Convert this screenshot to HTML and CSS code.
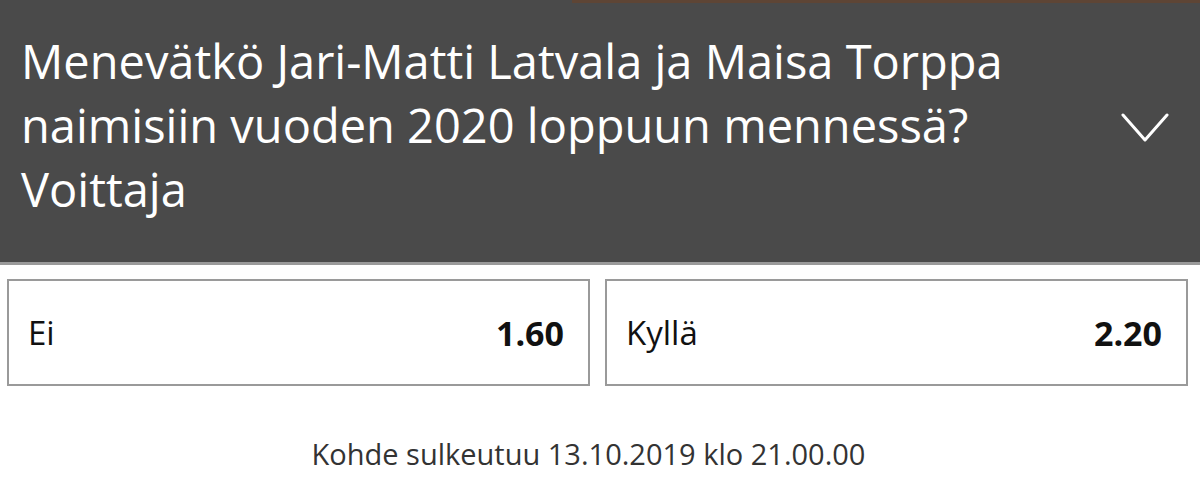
FILE: index.html
```html
<!DOCTYPE html>
<html lang="fi">
<head>
    <meta charset="UTF-8">
    <title>Voittaja</title>
    <link rel="stylesheet" href="styles.css">
</head>
<body>
    <div class="market">
        <div class="market-head">
            <div class="topline"></div>
            <div class="head-row">
                <h1 class="title">Menevätkö Jari-Matti Latvala ja Maisa Torppa naimisiin vuoden 2020 loppuun mennessä? Voittaja</h1>
                <svg class="chevron" width="48" height="32" viewBox="0 0 48 32">
                    <polyline points="2,3 24,28 46,3" fill="none" stroke="#fff" stroke-width="3" stroke-linecap="round" stroke-linejoin="round"/>
                </svg>
            </div>
        </div>
        <div class="odds">
            <div class="odd">
                <span class="name">Ei</span>
                <span class="price">1.60</span>
            </div>
            <div class="odd">
                <span class="name">Kyllä</span>
                <span class="price">2.20</span>
            </div>
        </div>
        <div class="closing">Kohde sulkeutuu 13.10.2019 klo 21.00.00</div>
    </div>
</body>
</html>
```

FILE: styles.css
```css
body{
    margin: 0;
    background: #fff;
    font-family: "Open Sans", sans-serif;
}
.market-head{
    background: #4a4a4a;
    border-bottom: 3px solid #9a9a9a;
    height: 262px;
    box-sizing: content-box;
}
.topline{
    height: 3px;
    margin-left: 572px;
    background: #5e4535;
}
.head-row{
    display: flex;
    align-items: center;
    padding: 0 31px 0 21px;
}
.title{
    margin: 0;
    padding-top: 26px;
    width: 1010px;
    color: #fff;
    font-size: 47px;
    font-weight: normal;
    line-height: 64px;
}
.chevron{
    margin-left: auto;
    margin-top: 32px;
}
.odds{
    display: flex;
    gap: 15px;
    padding: 14px 12px 0 7px;
}
.odd{
    flex: 1;
    height: 103px;
    border: 2px solid #9a9a9a;
    display: flex;
    align-items: center;
    justify-content: space-between;
    padding: 0 24px 0 19px;
}
.name{
    font-size: 33px;
    color: #111;
}
.price{
    font-size: 34px;
    font-weight: bold;
    color: #111;
}
.closing{
    text-align: center;
    margin-top: 48px;
    padding-right: 23px;
    font-size: 29px;
    color: #333;
}
```
